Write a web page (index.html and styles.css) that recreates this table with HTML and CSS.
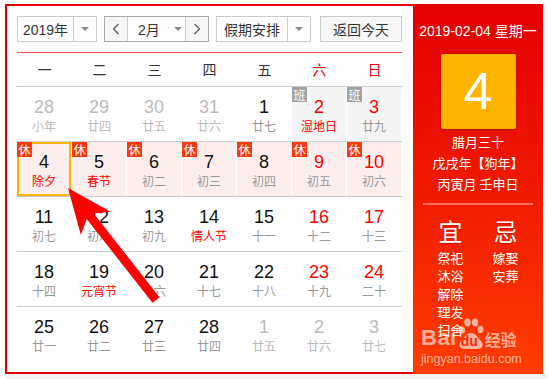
FILE: index.html
```html
<!DOCTYPE html>
<html>
<head>
<meta charset="utf-8">
<link rel="stylesheet" href="styles.css">
</head>
<body>
<div class="frame">
  <div class="cal">
    <div class="toolbar">
      <div class="sel sel-year"><span class="sel-text">2019年</span><span class="sel-arrow"><i class="tri"></i></span></div>
      <div class="month-group">
        <span class="nav"><svg width="8" height="12" viewBox="0 0 8 12"><polyline points="6.5,1 1.5,6 6.5,11" fill="none" stroke="#555" stroke-width="1.2"/></svg></span>
        <span class="month"><span class="month-text">2月</span><i class="tri"></i></span>
        <span class="nav nav-r"><svg width="8" height="12" viewBox="0 0 8 12"><polyline points="1.5,1 6.5,6 1.5,11" fill="none" stroke="#555" stroke-width="1.2"/></svg></span>
      </div>
      <div class="sel sel-holiday"><span class="sel-text">假期安排</span><span class="sel-arrow"><i class="tri"></i></span></div>
      <div class="btn-today">返回今天</div>
    </div>
    <div class="weekdays">
      <span>一</span><span>二</span><span>三</span><span>四</span><span>五</span><span class="we">六</span><span class="we">日</span>
    </div>
    <div class="grid">
      <div class="row">
        <div class="cell other"><b>28</b><em>小年</em></div>
        <div class="cell other"><b>29</b><em>廿四</em></div>
        <div class="cell other"><b>30</b><em>廿五</em></div>
        <div class="cell other"><b>31</b><em>廿六</em></div>
        <div class="cell"><b>1</b><em>廿七</em></div>
        <div class="cell work wkend"><span class="badge ban">班</span><b>2</b><em class="fest">湿地日</em></div>
        <div class="cell work wkend"><span class="badge ban">班</span><b>3</b><em>廿九</em></div>
      </div>
      <div class="row">
        <div class="cell rest today"><span class="badge xiu">休</span><b>4</b><em class="fest">除夕</em></div>
        <div class="cell rest"><span class="badge xiu">休</span><b>5</b><em class="fest">春节</em></div>
        <div class="cell rest"><span class="badge xiu">休</span><b>6</b><em>初二</em></div>
        <div class="cell rest"><span class="badge xiu">休</span><b>7</b><em>初三</em></div>
        <div class="cell rest"><span class="badge xiu">休</span><b>8</b><em>初四</em></div>
        <div class="cell rest wkend"><span class="badge xiu">休</span><b>9</b><em>初五</em></div>
        <div class="cell rest wkend"><span class="badge xiu">休</span><b>10</b><em>初六</em></div>
      </div>
      <div class="row">
        <div class="cell"><b>11</b><em>初七</em></div>
        <div class="cell"><b>12</b><em>初八</em></div>
        <div class="cell"><b>13</b><em>初九</em></div>
        <div class="cell"><b>14</b><em class="fest">情人节</em></div>
        <div class="cell"><b>15</b><em>十一</em></div>
        <div class="cell wkend"><b>16</b><em>十二</em></div>
        <div class="cell wkend"><b>17</b><em>十三</em></div>
      </div>
      <div class="row">
        <div class="cell"><b>18</b><em>十四</em></div>
        <div class="cell"><b>19</b><em class="fest">元宵节</em></div>
        <div class="cell"><b>20</b><em>十六</em></div>
        <div class="cell"><b>21</b><em>十七</em></div>
        <div class="cell"><b>22</b><em>十八</em></div>
        <div class="cell wkend"><b>23</b><em>十九</em></div>
        <div class="cell wkend"><b>24</b><em>二十</em></div>
      </div>
      <div class="row last">
        <div class="cell"><b>25</b><em>廿一</em></div>
        <div class="cell"><b>26</b><em>廿二</em></div>
        <div class="cell"><b>27</b><em>廿三</em></div>
        <div class="cell"><b>28</b><em>廿四</em></div>
        <div class="cell other"><b>1</b><em>廿五</em></div>
        <div class="cell other"><b>2</b><em>廿六</em></div>
        <div class="cell other"><b>3</b><em>廿七</em></div>
      </div>
    </div>
  </div>
  <div class="panel">
    <div class="p-date">2019-02-04 星期一</div>
    <div class="p-day">4</div>
    <div class="p-lunar">
      <div>腊月三十</div>
      <div>戊戌年【狗年】</div>
      <div>丙寅月 壬申日</div>
    </div>
    <div class="p-line"></div>
    <div class="p-yiji">
      <div class="p-col">
        <div class="p-title">宜</div>
        <div>祭祀</div><div>沐浴</div><div>解除</div><div>理发</div><div>扫舍</div>
      </div>
      <div class="p-col">
        <div class="p-title">忌</div>
        <div>嫁娶</div><div>安葬</div>
      </div>
    </div>
    <div class="wm">
      <div class="wm-top">
        <span class="wm-bai">Bai</span>
        <span class="wm-paw">
          <svg width="26" height="34" viewBox="0 0 26 34">
            <ellipse cx="4" cy="14" rx="3" ry="3.8" fill="#fff"/>
            <ellipse cx="9.5" cy="6.5" rx="3.2" ry="4" fill="#fff"/>
            <ellipse cx="17" cy="6.5" rx="3.2" ry="4" fill="#fff"/>
            <ellipse cx="22.5" cy="13.5" rx="3" ry="3.8" fill="#fff"/>
            <path d="M13 17 C8 17 6 22 3 25 C0 28 1 33 6 33 L20 33 C25 33 26 28 23 25 C20 22 18 17 13 17 Z" fill="#fff"/>
          </svg>
          <span class="wm-du">du</span>
        </span>
        <span class="wm-jy">经验</span>
      </div>
      <div class="wm-url">jingyan.baidu.com</div>
    </div>
  </div>
</div>
<div class="foot"></div>
<svg class="arrow" width="548" height="379" viewBox="0 0 548 379">
  <polygon points="68,188 110.7,211.7 93.7,213.5 159.5,297.2 152.5,302.8 86.7,219.1 80.9,235.1" fill="#ff0000"/>
</svg>
</body>
</html>
```

FILE: styles.css
```css
* { box-sizing: border-box; }
html, body { margin: 0; padding: 0; background: #fff; }
body {
  font-family: "Liberation Sans", "Noto Sans CJK SC", sans-serif;
  width: 548px;
  height: 379px;
  overflow: hidden;
  position: relative;
}
.frame {
  margin: 4px 5px 0 5px;
  width: 538px;
  height: 370px;
  display: flex;
}
.cal {
  width: 408px;
  height: 370px;
  border: 2px solid #e10000;
  border-right: 0;
  padding: 10px 11px 0 10px;
  background: #fff;
}
.toolbar {
  display: flex;
  height: 26px;
  font-size: 14px;
  color: #333;
  font-family: "Liberation Sans", "Noto Sans CJK SC", sans-serif;
}
.sel {
  display: flex;
  border: 1px solid #ccc;
  height: 26px;
  background: #fff;
}
.sel-text {
  display: flex;
  align-items: center;
  justify-content: center;
  border-right: 1px solid #ccc;
}
.sel-arrow {
  display: flex;
  align-items: center;
  justify-content: center;
  flex: 1;
}
.tri {
  display: block;
  width: 0;
  height: 0;
  border-left: 4px solid transparent;
  border-right: 4px solid transparent;
  border-top: 4px solid #888;
}
.sel-year { width: 80px; }
.sel-year .sel-text { width: 56px; }
.month-group {
  margin-left: 7px;
  width: 105px;
  display: flex;
  border: 1px solid #aaa;
  height: 26px;
}
.nav {
  width: 23px;
  display: flex;
  align-items: center;
  justify-content: center;
  background: #f7f7f7;
  border-right: 1px solid #ccc;
}
.nav-r { border-right: 0; border-left: 1px solid #ccc; }
.month {
  flex: 1;
  display: flex;
  align-items: center;
  background: #fff;
  padding-left: 10px;
}
.month-text { width: 36px; }
.sel-holiday { margin-left: 7px; width: 95px; }
.sel-holiday .sel-text { width: 71px; }
.btn-today {
  margin-left: 9px;
  width: 82px;
  border: 1px solid #ccc;
  background: #f7f7f7;
  display: flex;
  align-items: center;
  justify-content: center;
}
.weekdays {
  margin-top: 10px;
  border-top: 1px solid #ff4a4a;
  border-bottom: 1px solid #ccc;
  display: grid;
  grid-template-columns: repeat(7, 55px);
  height: 35px;
  line-height: 33px;
  font-size: 14px;
  color: #333;
  text-align: center;
  font-family: "Noto Sans CJK SC", sans-serif;
}
.weekdays .we { color: #e00; }
.row {
  display: grid;
  grid-template-columns: repeat(7, 55px);
  height: 55px;
  border-bottom: 1px solid #ccc;
}
.row.last { border-bottom: 0; }
.cell {
  position: relative;
  margin-right: 1px;
  text-align: center;
  padding-top: 10px;
}
.cell b {
  display: block;
  font-weight: normal;
  font-family: "Liberation Sans", sans-serif;
  font-size: 18px;
  line-height: 20px;
  color: #111;
}
.cell em {
  display: block;
  font-style: normal;
  font-family: "Noto Sans CJK SC", sans-serif;
  font-size: 12px;
  line-height: 18px;
  color: #999;
}
.cell.wkend b { color: #f00; }
.cell.other b { color: #bbb; }
.cell.other em { color: #bbb; }
.cell em.fest { color: #f00; }
.cell.work { background: #f5f5f5; }
.cell.rest { background: #fdeeee; }
.cell.today { box-shadow: inset 0 0 0 2px #ffb400; }
.badge {
  position: absolute;
  left: 0;
  top: 0;
  width: 15px;
  height: 15px;
  font-size: 12px;
  line-height: 15px;
  color: #fff;
  text-align: center;
  font-family: "Noto Sans CJK SC", sans-serif;
}
.badge.xiu { background: #f53a14; }
.badge.ban { background: #a3a3a3; }
.panel {
  position: relative;
  width: 130px;
  height: 370px;
  background: linear-gradient(180deg, #e30000 0%, #ef1a00 50%, #ff3d00 100%);
  color: #fff;
  display: flex;
  flex-direction: column;
  align-items: center;
  font-family: "Noto Sans CJK SC", sans-serif;
}
.p-date {
  margin-top: 17px;
  font-size: 14px;
  line-height: 20px;
  font-family: "Liberation Sans", "Noto Sans CJK SC", sans-serif;
}
.p-day {
  margin-top: 13px;
  width: 75px;
  height: 75px;
  background: #ffb400;
  border-radius: 2px;
  box-shadow: 0 1px 3px rgba(120,0,0,0.35);
  font-family: "Liberation Sans", sans-serif;
  font-size: 52px;
  line-height: 75px;
  text-align: center;
  color: #fff;
}
.p-lunar {
  margin-top: 2px;
  font-size: 13px;
  line-height: 21px;
  text-align: center;
}
.p-line {
  margin-top: 9px;
  width: 110px;
  height: 2px;
  background: #ff6d5e;
}
.p-yiji {
  display: flex;
  width: 110px;
  margin-top: 12px;
}
.p-col {
  width: 55px;
  text-align: center;
  font-size: 13px;
  line-height: 18px;
}
.p-title {
  font-size: 24px;
  line-height: 28px;
  margin-bottom: 4px;
  text-shadow: 0 1px 1px rgba(120,0,0,0.4);
}
.wm {
  position: absolute;
  left: 8px;
  top: 310px;
  width: 110px;
  color: rgba(255,255,255,0.62);
}
.wm-top {
  display: flex;
  align-items: flex-end;
  height: 36px;
}
.wm-bai {
  font-family: "Liberation Sans", sans-serif;
  font-weight: bold;
  font-size: 22px;
  line-height: 24px;
  letter-spacing: 0.5px;
}
.wm-paw {
  position: relative;
  width: 26px;
  height: 34px;
  margin-left: 1px;
  opacity: 0.62;
}
.wm-paw svg { display: block; }
.wm-du {
  position: absolute;
  left: 3px;
  top: 17px;
  font-family: "Liberation Sans", sans-serif;
  font-weight: bold;
  font-size: 14px;
  line-height: 16px;
  color: #f32800;
}
.wm-jy {
  margin-left: 1px;
  font-weight: bold;
  font-size: 16px;
  line-height: 22px;
}
.wm-url {
  font-family: "Liberation Sans", sans-serif;
  font-size: 12.5px;
  line-height: 16px;
  margin-top: 1px;
}
.foot {
  margin-left: 5px;
  height: 6px;
  background: #f2f2f2;
}
.arrow {
  position: absolute;
  left: 0;
  top: 0;
  pointer-events: none;
}
```
